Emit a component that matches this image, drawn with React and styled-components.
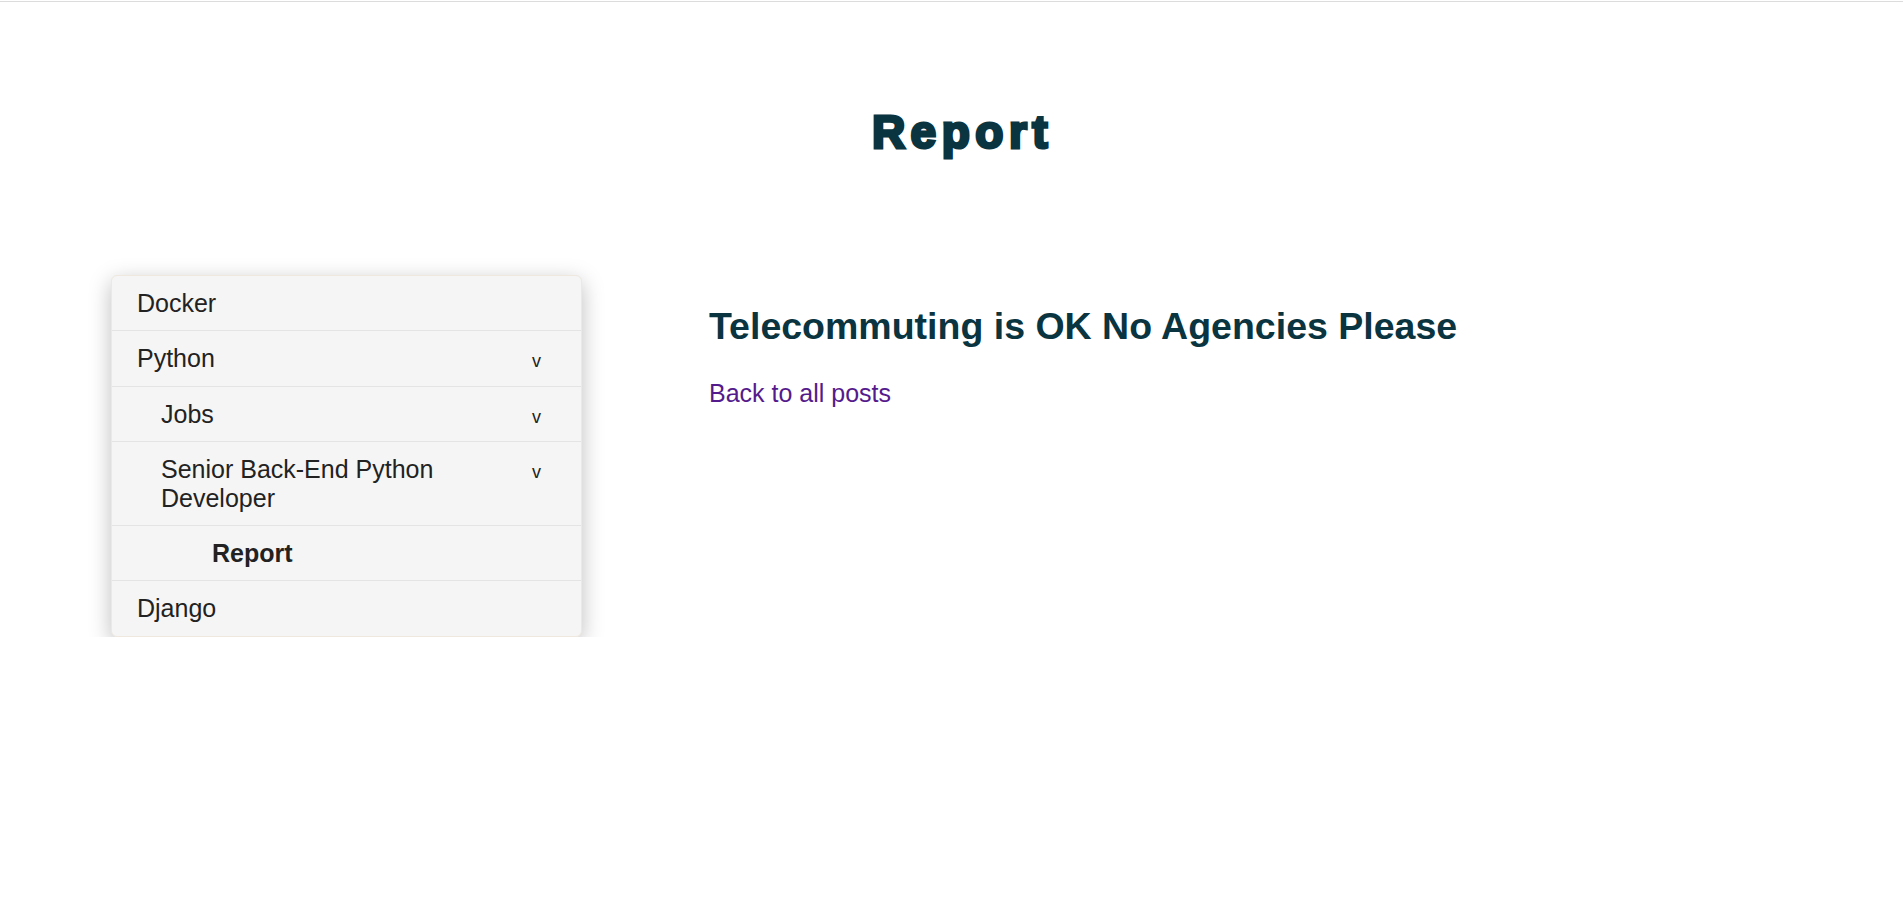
import React from "react";
import styled, { createGlobalStyle } from "styled-components";

const GlobalStyle = createGlobalStyle`
  html, body {
    margin: 0;
    padding: 0;
    background: #ffffff;
    font-family: "Liberation Sans", Arial, sans-serif;
  }
`;

const TopRule = styled.div`
  height: 1px;
  border-bottom: 1px solid #dcdcdc;
`;

const Page = styled.main`
  display: flex;
  flex-direction: column;
`;

const PageTitle = styled.h1`
  margin: 103px 0 0;
  padding-left: 22px;
  text-align: center;
  font-size: 46px;
  line-height: 55px;
  font-weight: 900;
  letter-spacing: 5.5px;
  color: #0a3440;
  -webkit-text-stroke: 3px #0a3440;
`;

const Layout = styled.div`
  display: flex;
  align-items: flex-start;
  gap: 127px;
  margin-top: 115px;
  padding-left: 111px;
`;

const Sidebar = styled.nav`
  width: 471px;
  box-sizing: border-box;
  background: #f5f5f5;
  border: 1px solid #eee8df;
  border-radius: 6px;
  box-shadow: 0 6px 22px rgba(0, 0, 0, 0.26);
  overflow: hidden;
`;

const Row = styled.div`
  display: flex;
  align-items: baseline;
  justify-content: space-between;
  padding: 13px 40px 13px ${(p) => p.$indent}px;
  border-bottom: 1px solid #e4e4e4;
  font-size: 25px;
  line-height: 28.4px;
  color: #222222;
  font-weight: ${(p) => (p.$active ? 700 : 400)};

  &:last-child {
    border-bottom: none;
  }
`;

const Label = styled.span`
  flex: 1;
  min-width: 0;
`;

const Chevron = styled.span`
  flex: none;
  margin-left: 16px;
  font-size: 18px;
  line-height: 18px;
  color: #222222;
`;

const Content = styled.section`
  display: flex;
  flex-direction: column;
  align-items: flex-start;
  padding-top: 29px;
`;

const PostTitle = styled.h2`
  margin: 0 0 29px;
  font-size: 37.5px;
  line-height: 1.2;
  font-weight: 700;
  color: #0a3440;
`;

const BackLink = styled.a`
  font-size: 25px;
  line-height: 1.2;
  color: #551a8b;
  text-decoration: none;
`;

const items = [
  { label: "Docker", indent: 25 },
  { label: "Python", indent: 25, chevron: true },
  { label: "Jobs", indent: 49, chevron: true },
  { label: "Senior Back-End Python Developer", indent: 49, chevron: true },
  { label: "Report", indent: 100, active: true },
  { label: "Django", indent: 25 },
];

export default function App() {
  return (
    <>
      <GlobalStyle />
      <TopRule />
      <Page>
        <PageTitle>Report</PageTitle>
        <Layout>
          <Sidebar>
            {items.map((it) => (
              <Row key={it.label} $indent={it.indent} $active={it.active}>
                <Label>{it.label}</Label>
                {it.chevron && <Chevron>v</Chevron>}
              </Row>
            ))}
          </Sidebar>
          <Content>
            <PostTitle>Telecommuting is OK No Agencies Please</PostTitle>
            <BackLink href="#">Back to all posts</BackLink>
          </Content>
        </Layout>
      </Page>
    </>
  );
}
